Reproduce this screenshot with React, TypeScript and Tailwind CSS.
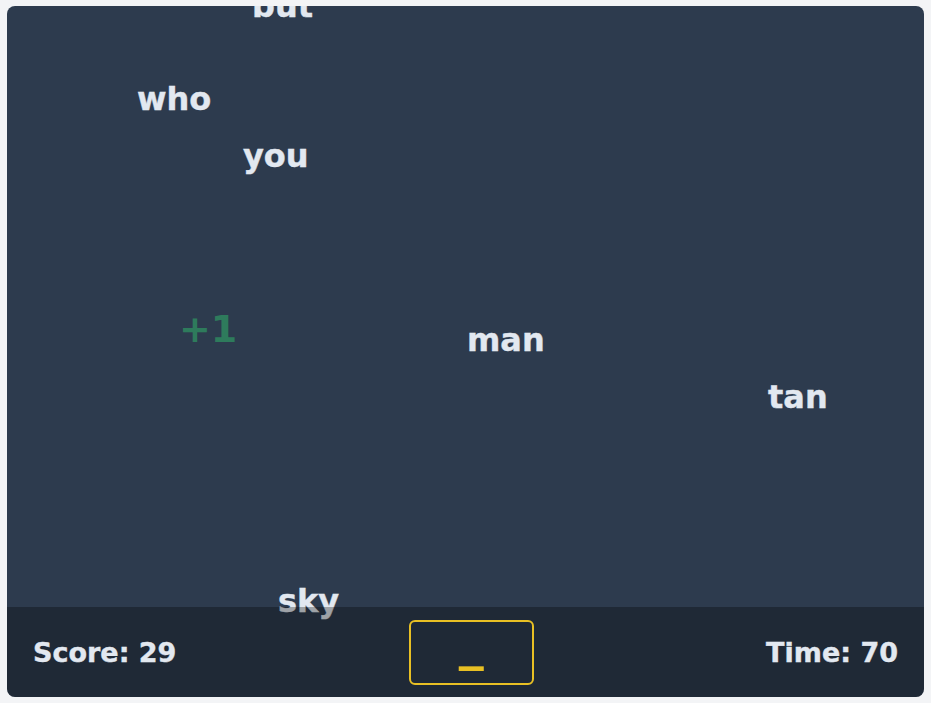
import React from "react";

type Word = { text: string; left: number; top: number };

const words: Word[] = [
  { text: "but", left: 245, top: -16 },
  { text: "who", left: 130, top: 77 },
  { text: "you", left: 236, top: 134 },
  { text: "man", left: 460, top: 318 },
  { text: "tan", left: 761, top: 375 },
  { text: "sky", left: 271, top: 579 },
];

export default function App() {
  return (
    <div className="min-h-screen w-full bg-[#f3f4f6] p-[6px_7px] flex" style={{ fontFamily: '"DejaVu Sans", Verdana, sans-serif' }}>
      <div className="flex-1 h-[691px] rounded-lg bg-[#2d3b4e] overflow-hidden flex flex-col">
        <div className="relative flex-1">
          {words.map((w) => (
            <span
              key={w.text}
              className="absolute text-[32px] leading-none font-bold text-[#e2e8f0] whitespace-nowrap [-webkit-text-stroke:0.4px_#e2e8f0]"
              style={{ left: w.left, top: w.top }}
            >
              {w.text}
            </span>
          ))}
          <span
            className="absolute text-[38px] leading-none font-bold text-[#2e7b5c] whitespace-nowrap"
            style={{ left: 172, top: 304 }}
          >
            +1
          </span>
        </div>
        <div className="relative z-10 h-[90px] bg-black/30 flex items-center justify-between px-[26px]">
          <div className="text-[27px] font-bold text-[#e2e8f0] leading-none [-webkit-text-stroke:0.4px_#e2e8f0]">Score: 29</div>
          <div className="w-[125px] h-[65px] border-2 border-[#e8c024] rounded-md flex items-start justify-center">
            <span className="text-[50px] font-bold leading-none text-[#e8c024] mt-[-5px]">_</span>
          </div>
          <div className="text-[27px] font-bold text-[#e2e8f0] leading-none [-webkit-text-stroke:0.4px_#e2e8f0]">Time: 70</div>
        </div>
      </div>
    </div>
  );
}
